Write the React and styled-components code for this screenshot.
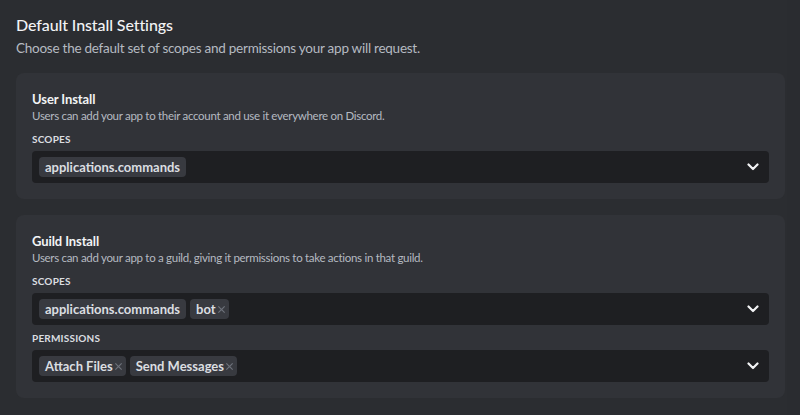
import styled, { createGlobalStyle } from 'styled-components';

const GlobalStyle = createGlobalStyle`
  html, body {
    margin: 0;
    padding: 0;
    background: #2b2d31;
  }
  body {
    font-family: Lato, "Noto Sans", sans-serif;
    color: #dbdee1;
  }
`;

const installs = [
  {
    title: 'User Install',
    desc: 'Users can add your app to their account and use it everywhere on Discord.',
    fields: [
      { label: 'Scopes', tags: [{ name: 'applications.commands', fixed: true }] },
    ],
  },
  {
    title: 'Guild Install',
    desc: 'Users can add your app to a guild, giving it permissions to take actions in that guild.',
    fields: [
      { label: 'Scopes', tags: [{ name: 'applications.commands', fixed: true }, { name: 'bot' }] },
      { label: 'Permissions', tags: [{ name: 'Attach Files' }, { name: 'Send Messages' }] },
    ],
  },
];

const App = () => {
  return (
    <>
      <GlobalStyle />
      <Page>
        <Main>
          <Heading>Default Install Settings</Heading>
          <Intro>Choose the default set of scopes and permissions your app will request.</Intro>
          <Cards>
            {installs.map((install) => (
              <Card key={install.title}>
                <CardTitle>{install.title}</CardTitle>
                <CardDesc>{install.desc}</CardDesc>
                {install.fields.map((field) => (
                  <Field key={field.label}>
                    <FieldLabel>{field.label}</FieldLabel>
                    <Select>
                      <Tags>
                        {field.tags.map((tag) => (
                          <Tag key={tag.name} $fixed={tag.fixed}>
                            {tag.name}
                            {!tag.fixed && (
                              <Remove viewBox="0 0 10 10" aria-hidden="true">
                                <path d="M1.5 1.5 L8.5 8.5 M8.5 1.5 L1.5 8.5" />
                              </Remove>
                            )}
                          </Tag>
                        ))}
                      </Tags>
                      <Chevron viewBox="0 0 12 8" aria-hidden="true">
                        <path d="M1.5 1.5 L6 6 L10.5 1.5" />
                      </Chevron>
                    </Select>
                  </Field>
                ))}
              </Card>
            ))}
          </Cards>
        </Main>
        <Track />
      </Page>
    </>
  );
};

const Page = styled.div`
  display: flex;
  height: 415px;
  overflow: hidden;
`;

const Main = styled.div`
  flex: 1;
  padding: 14px 2px 0 16px;
`;

const Track = styled.div`
  width: 13px;
  background: #2a2c30;
`;

const Heading = styled.h2`
  margin: 0;
  font-size: 16px;
  line-height: 22px;
  font-weight: 500;
  letter-spacing: -0.1px;
  color: #f2f3f5;
`;

const Intro = styled.p`
  margin: 2px 0 0;
  font-size: 13.5px;
  line-height: 20px;
  letter-spacing: -0.25px;
  color: #b5bac1;
`;

const Cards = styled.div`
  display: flex;
  flex-direction: column;
  gap: 16px;
  margin-top: 15px;
`;

const Card = styled.section`
  background: #313338;
  border-radius: 8px;
  padding: 17px 16px 16px;
`;

const CardTitle = styled.h3`
  margin: 0;
  font-size: 13px;
  line-height: 18px;
  font-weight: 700;
  letter-spacing: -0.1px;
  color: #f2f3f5;
`;

const CardDesc = styled.p`
  margin: 0;
  font-size: 11.5px;
  line-height: 16px;
  letter-spacing: -0.3px;
  color: #b5bac1;
`;

const Field = styled.div`
  margin-top: 7px;
  & + & {
    margin-top: 5px;
  }
`;

const FieldLabel = styled.div`
  font-size: 10px;
  line-height: 16px;
  font-weight: 700;
  letter-spacing: 0.2px;
  text-transform: uppercase;
  color: #dbdee1;
  margin-bottom: 4px;
`;

const Select = styled.div`
  display: flex;
  align-items: center;
  justify-content: space-between;
  height: 32px;
  padding: 0 10px 0 7px;
  background: #1e1f22;
  border-radius: 4px;
`;

const Tags = styled.div`
  display: flex;
  gap: 4px;
`;

const Tag = styled.span`
  display: inline-flex;
  align-items: center;
  height: 20px;
  padding: 0 ${(p) => (p.$fixed ? '6px' : '3px')} 0 6px;
  border-radius: 4px;
  background: #383a40;
  font-size: 13px;
  font-weight: 700;
  letter-spacing: 0;
  color: #dbdee1;
`;

const Remove = styled.svg`
  width: 9px;
  height: 9px;
  margin-left: 1px;
  fill: none;
  stroke: #6d717a;
  stroke-width: 1.3;
`;

const Chevron = styled.svg`
  width: 12px;
  height: 8px;
  fill: none;
  stroke: #f2f3f5;
  stroke-width: 2.2;
  stroke-linecap: round;
  stroke-linejoin: round;
`;

export default App;
